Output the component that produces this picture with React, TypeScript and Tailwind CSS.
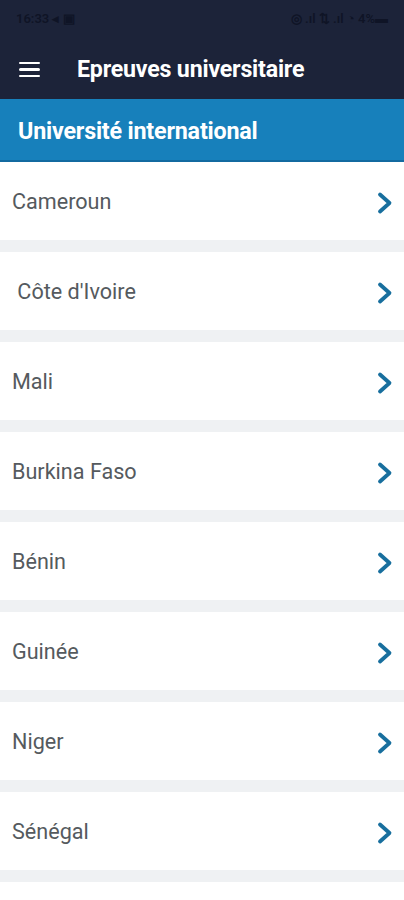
import React from "react";

const countries = [
  "Cameroun",
  " Côte d'Ivoire",
  "Mali",
  "Burkina Faso",
  "Bénin",
  "Guinée",
  "Niger",
  "Sénégal",
];

function Chevron() {
  return (
    <svg width="18" height="24" viewBox="0 0 18 24" fill="none">
      <path d="M4 3.5 L13.5 12 L4 20.5" stroke="#186f9e" strokeWidth="3.8" strokeLinecap="round" strokeLinejoin="round" />
    </svg>
  );
}

export default function App() {
  return (
    <div className="w-[404px] h-[900px] overflow-hidden bg-white" style={{ fontFamily: "Roboto, 'Liberation Sans', sans-serif" }}>
      <div className="bg-[#1c2339]">
        <div className="h-[38px] flex items-center justify-between px-[16px] text-[13px] text-[#0f1426] font-semibold">
          <span>16:33 ◂ ▣</span>
          <span>◎ .ıl ⇅ .ıl ◔ 4%▬</span>
        </div>
        <div className="h-[61px] flex items-center pt-[2px]">
          <div className="w-[77px] pl-[19px] flex flex-col gap-[4px]">
            <div className="w-[21px] h-[2.5px] bg-white rounded" />
            <div className="w-[21px] h-[2.5px] bg-white rounded" />
            <div className="w-[21px] h-[2.5px] bg-white rounded" />
          </div>
          <span className="text-white font-bold text-[23.2px] tracking-[-0.2px]">Epreuves universitaire</span>
        </div>
      </div>
      <div className="h-[63px] bg-[#1780bb] border-b-[2px] border-[#136aa0] flex items-center pl-[18px] pt-[3px]">
        <span className="text-white font-bold text-[23.3px] tracking-[-0.2px]">Université international</span>
      </div>
      <div className="flex flex-col">
        {countries.map((c) => (
          <div key={c} className="flex flex-col">
            <div className="h-[78px] flex items-center justify-between pl-[12px] pr-[10px] pt-[3px]">
              <span className="text-[21.6px] text-[#555a5e] whitespace-pre">{c}</span>
              <Chevron />
            </div>
            <div className="h-[12px] bg-[#eff1f3]" />
          </div>
        ))}
        <div className="h-[30px]" />
      </div>
    </div>
  );
}
